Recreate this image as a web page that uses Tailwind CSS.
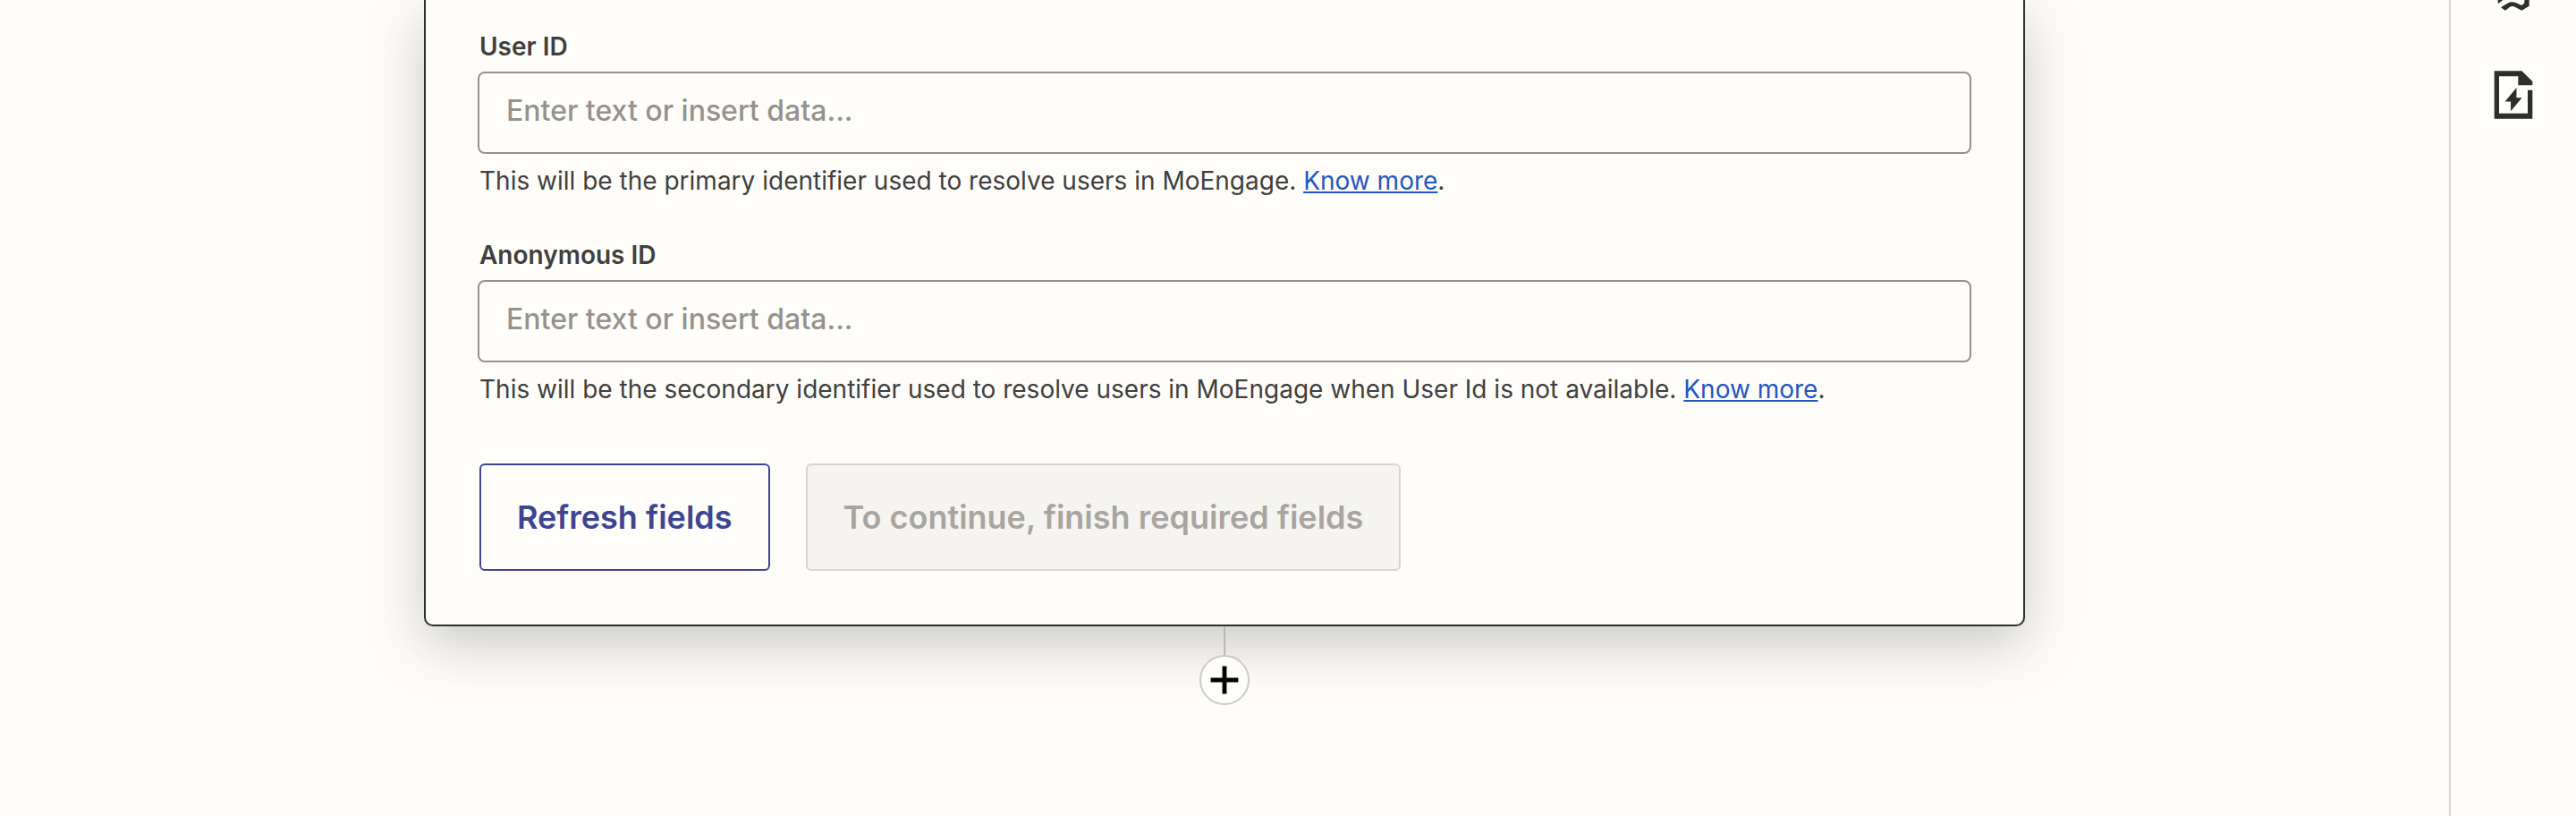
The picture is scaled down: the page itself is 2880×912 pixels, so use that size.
<!DOCTYPE html>
<html lang="en">
<head>
<meta charset="utf-8">
<title>Step editor</title>
<script src="https://cdn.jsdelivr.net/npm/@tailwindcss/browser@4"></script>
</head>
<body class="flex min-h-screen overflow-hidden bg-[#fffdf9] font-['Inter',sans-serif] text-[#403f3e]">
  <main class="flex flex-1 flex-col items-center">
    <section class="w-full max-w-[1790px] rounded-b-[10px] border-2 border-t-0 border-[#2d2e2e] bg-[#fffdf9] px-[58px] pt-8 pb-[60px] shadow-[0_20px_60px_rgba(45,46,46,0.25)]">
      <form>
        <div class="flex flex-col">
          <label for="user-id" class="px-0.5 text-[28px] leading-10 font-semibold">User ID</label>
          <input id="user-id" type="text" placeholder="Enter text or insert data..." class="mt-2 h-[92px] w-full rounded-lg border-2 border-[#95928e] bg-[#fffdf9] px-[30px] pb-1.5 text-[32px] font-medium placeholder:text-[#95928e] placeholder:opacity-100">
          <p class="mt-2.5 px-0.5 text-[28px] leading-10">This will be the primary identifier used to resolve users in MoEngage. <a href="#" class="text-[#1f57c3] underline">Know more</a>.</p>
        </div>
        <div class="mt-[43px] flex flex-col">
          <label for="anonymous-id" class="px-0.5 text-[28px] leading-10 font-semibold">Anonymous ID</label>
          <input id="anonymous-id" type="text" placeholder="Enter text or insert data..." class="mt-2 h-[92px] w-full rounded-lg border-2 border-[#95928e] bg-[#fffdf9] px-[30px] pb-1.5 text-[32px] font-medium placeholder:text-[#95928e] placeholder:opacity-100">
          <p class="mt-2.5 px-0.5 text-[28px] leading-10">This will be the secondary identifier used to resolve users in MoEngage when User Id is not available. <a href="#" class="text-[#1f57c3] underline">Know more</a>.</p>
        </div>
        <div class="mt-[63px] flex gap-10 px-0.5">
          <button type="button" class="h-[120px] rounded-md border-2 border-[#3d4592] px-10 text-[36px] font-semibold text-[#3d4592]">Refresh fields</button>
          <button type="submit" disabled class="h-[120px] rounded-md border-2 border-[#d7d5d2] bg-[#f6f4f1] px-10 text-[36px] font-semibold text-[#a8a5a0]">To continue, finish required fields</button>
        </div>
      </form>
    </section>
    <div class="relative flex flex-col items-center">
      <div class="h-8 w-0.5 bg-[#b8b7b5]"></div>
      <button type="button" aria-label="Add step" class="flex size-14 items-center justify-center rounded-full border-2 border-[#cacaca] bg-[#fffdf9]">
        <svg class="size-8" viewBox="0 0 32 32" fill="#000"><path d="M13.600 .6h4.800v13h13v4.800h-13v13h-4.800v-13h-13v-4.800h13z"/></svg>
      </button>
    </div>
  </main>
  <aside class="flex w-[142px] flex-col items-center border-l-2 border-[#d7d5d2]">
    <button type="button" aria-label="History">
      <svg class="h-[13px] w-16" viewBox="0 0 192 39" fill="#2d2e2e"><path d="M44 0h16v1L44 13z"/><path d="M54 25 76 11Q90 4 104 9l20 9 9-8V0h16v20l-25 15-23-12q-9-4-17 0L69 35z"/></svg>
    </button>
    <button type="button" aria-label="Zap details" class="mt-[61px]">
      <svg class="size-16" viewBox="0 0 24 24" fill="#2d2e2e"><path d="M4 2h11.500L20 6.400V8h-6V4.200H6v15.600h12V10h2v12H4z"/><path d="M13.300 9 8.500 14.800h2.400v4L15.600 13.200h-2.300z"/></svg>
    </button>
  </aside>
</body>
</html>
